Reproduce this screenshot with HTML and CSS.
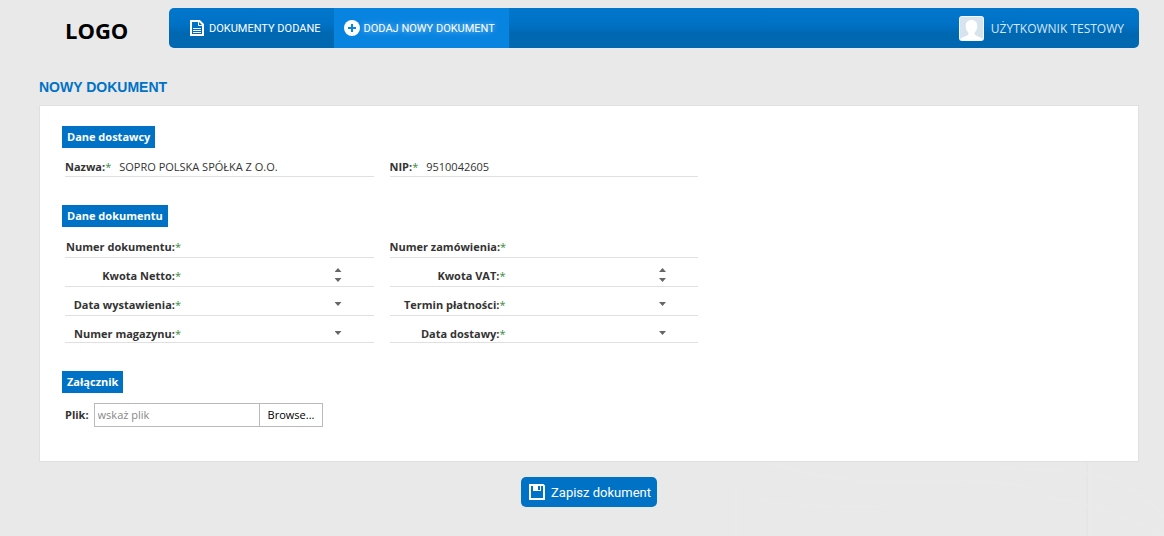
FILE: index.html
```
<!DOCTYPE html>
<html lang="pl">
<head>
<meta charset="utf-8">
<title>Nowy dokument</title>
<meta name="viewport" content="width=device-width, initial-scale=1">
<link rel="stylesheet" href="styles.css">
</head>
<body>
<svg class="backdrop" viewBox="0 0 464 96" aria-hidden="true">
  <path class="streak-dark" d="M387 20V96"/>
  <path class="streak-light" d="M390 20V96M36 50V96M70 24Q140 44 210 42T330 46M60 60Q130 70 190 66M300 28Q370 30 400 36T464 76M345 56Q420 70 464 96"/>
</svg>
<div class="page">
  <header class="header">
    <div class="logo">LOGO</div>
    <nav class="nav">
      <a class="nav-link" href="#">
        <svg width="14" height="16" viewBox="0 0 14 16" aria-hidden="true"><path d="M1 1h8.500l3.500 3.500V15H1z" fill="none" stroke="#fff" stroke-width="2"/><path d="M8.500 1v4.500H13M3 8.500h8M3 10.500h8M3 12.500h8" fill="none" stroke="#fff"/></svg>
        <span>DOKUMENTY DODANE</span>
      </a>
      <a class="nav-link active" href="#" aria-current="page">
        <svg width="16" height="16" viewBox="0 0 16 16" aria-hidden="true"><circle cx="8" cy="8" r="8" fill="#fff"/><path d="M8 4v8M4 8h8" stroke="#0783e0" stroke-width="2"/></svg>
        <span>DODAJ NOWY DOKUMENT</span>
      </a>
      <a class="user" href="#">
        <svg width="25" height="25" viewBox="0 0 25 25" aria-hidden="true"><rect width="25" height="25" rx="3" fill="#f2f7fa"/><rect x="1" y="1" width="23" height="23" rx="2" fill="#d7e4ee"/><path d="M12.500 4c3.700 0 5.800 2.500 5.800 6 0 2.800-1 5-2.600 6.300v2.200c1 1.700 5.800 2 7.800 4.500v1H1.500v-1c2-2.500 6.800-2.800 7.800-4.500v-2.200C7.700 15 6.700 12.800 6.700 10c0-3.500 2.100-6 5.800-6z" fill="#fff"/></svg>
        <span>UŻYTKOWNIK TESTOWY</span>
      </a>
    </nav>
  </header>

  <main>
    <h1 class="title">NOWY DOKUMENT</h1>
    <form>
      <div class="panel">
        <section class="group">
          <h2 class="tag">Dane dostawcy</h2>
          <div class="fields">
            <div class="field compact">
              <label for="nazwa">Nazwa:<span class="req">*</span></label>
              <input id="nazwa" type="text" value="SOPRO POLSKA SPÓŁKA Z O.O.">
            </div>
            <div class="field compact">
              <label for="nip">NIP:<span class="req">*</span></label>
              <input id="nip" type="text" value="9510042605">
            </div>
          </div>
        </section>

        <section class="group">
          <h2 class="tag">Dane dokumentu</h2>
          <div class="fields spaced">
            <div class="field">
              <label for="numer-dok">Numer dokumentu:<span class="req">*</span></label>
              <input id="numer-dok" type="text">
            </div>
            <div class="field">
              <label for="numer-zam">Numer zamówienia:<span class="req">*</span></label>
              <input id="numer-zam" type="text">
            </div>
            <div class="field">
              <label for="netto">Kwota Netto:<span class="req">*</span></label>
              <input id="netto" type="text" inputmode="decimal">
              <div class="spinner">
                <button type="button" class="arrow up" aria-label="Zwiększ kwotę netto"></button>
                <button type="button" class="arrow" aria-label="Zmniejsz kwotę netto"></button>
              </div>
            </div>
            <div class="field">
              <label for="vat">Kwota VAT:<span class="req">*</span></label>
              <input id="vat" type="text" inputmode="decimal">
              <div class="spinner">
                <button type="button" class="arrow up" aria-label="Zwiększ kwotę VAT"></button>
                <button type="button" class="arrow" aria-label="Zmniejsz kwotę VAT"></button>
              </div>
            </div>
            <div class="field">
              <label for="wystawienie">Data wystawienia:<span class="req">*</span></label>
              <input id="wystawienie" type="text">
              <button type="button" class="arrow" aria-label="Wybierz datę wystawienia"></button>
            </div>
            <div class="field">
              <label for="termin">Termin płatności:<span class="req">*</span></label>
              <input id="termin" type="text">
              <button type="button" class="arrow" aria-label="Wybierz termin płatności"></button>
            </div>
            <div class="field last">
              <label for="magazyn">Numer magazynu:<span class="req">*</span></label>
              <div class="select">
                <select id="magazyn"><option></option></select>
                <span class="arrow"></span>
              </div>
            </div>
            <div class="field last">
              <label for="dostawa">Data dostawy:<span class="req">*</span></label>
              <input id="dostawa" type="text">
              <button type="button" class="arrow" aria-label="Wybierz datę dostawy"></button>
            </div>
          </div>
        </section>

        <section class="group">
          <h2 class="tag">Załącznik</h2>
          <div class="file">
            <label for="plik">Plik:</label>
            <div class="file-box">
              <input id="plik" type="text" placeholder="wskaż plik">
              <button type="button">Browse...</button>
            </div>
          </div>
        </section>
      </div>
      <div class="actions">
        <button class="save" type="submit">
          <svg width="16" height="16" viewBox="0 0 16 16" aria-hidden="true"><path d="M1 1h13l1 1V15H1z" fill="none" stroke="#fff" stroke-width="2"/><path d="M4 1h8v6H4z" fill="#fff"/><path d="M9 2h2v4H9z" fill="#0072c6"/></svg>
          <span>Zapisz dokument</span>
        </button>
      </div>
    </form>
  </main>
</div>
</body>
</html>
```
FILE: styles.css
```
* {
  box-sizing: border-box;
}

body {
  margin: 0;
  min-height: 100vh;
  position: relative;
  background: #e9e9e9;
  color: #333;
  font: 11px/16px "Open Sans", "Noto Sans", sans-serif;
}

button,
input,
select {
  margin: 0;
  padding: 0;
  border: 0;
  background: none;
  color: inherit;
  font: inherit;
}

svg {
  display: block;
  flex: none;
}

.backdrop {
  position: absolute;
  right: 0;
  bottom: 0;
  width: 464px;
  height: 96px;
  fill: none;
  stroke-width: 2;
}

.streak-dark {
  stroke: #e6e6e6;
}

.streak-light {
  stroke: #eaeaea;
}

.page {
  position: relative;
  padding: 8px 25px 24px 39px;
}

.header {
  display: flex;
  align-items: stretch;
}

.logo {
  width: 130px;
  padding: 6px 0 0 26px;
  color: #000;
  font-size: 22px;
  font-weight: 700;
  line-height: 32px;
}

.nav {
  flex: 1;
  display: flex;
  height: 40px;
  overflow: hidden;
  border-radius: 5px;
  background: linear-gradient(#0077cc, #0072c6 40%, #0067b1 65%, #0067b1);
}

.nav-link {
  display: flex;
  align-items: center;
  gap: 5px;
  padding: 0 13px 0 21px;
  color: #fff;
  font: 11px/16px Roboto, sans-serif;
  text-decoration: none;
}

.nav-link span,
.user span,
.save span {
  padding-top: 2px;
}

.nav-link.active {
  padding: 0 14px 0 10px;
  gap: 4px;
  background: #0783e0;
  text-shadow: 0 0 6px #9fd4ff;
}

.user {
  display: flex;
  align-items: center;
  gap: 7px;
  margin-left: auto;
  padding-right: 15px;
  color: #d5e8f6;
  font-size: 12px;
  text-decoration: none;
}

.title {
  margin: 0;
  padding: 31px 0 10px;
  color: #0072c6;
  font: 700 14px/16px "Liberation Sans", Arial, sans-serif;
}

.panel {
  padding: 20px 22px 34px;
  border: 1px solid #e0e0e0;
  background: #fff;
}

.group + .group {
  margin-top: 28px;
}

.tag {
  width: fit-content;
  margin: 0;
  padding: 3px 5px;
  background: #0072c6;
  color: #fff;
  font-size: 11px;
  font-weight: 700;
  line-height: 16px;
}

.fields {
  display: grid;
  grid-template-columns: 1fr 1fr;
  column-gap: 16px;
  max-width: 636px;
  padding-left: 3px;
}

.fields.spaced {
  padding-top: 2px;
}

.field {
  display: flex;
  align-items: center;
  height: 29px;
  padding-top: 6px;
  border-bottom: 1px solid #e0e0e0;
}

.field.compact {
  padding-top: 8px;
}

.field.last {
  height: 27px;
  padding-top: 8px;
}

.field label {
  flex: none;
  width: 116px;
  padding-top: 2px;
  text-align: right;
  white-space: nowrap;
  font-weight: 700;
}

.field.compact label {
  width: auto;
  padding-right: 8px;
}

.field input,
.field select {
  flex: 1;
  min-width: 0;
  height: 18px;
}

.select {
  flex: 1;
  display: grid;
  align-items: center;
}

.select > * {
  grid-area: 1 / 1;
}

.select select {
  appearance: none;
}

.select .arrow {
  justify-self: end;
  pointer-events: none;
}

.req {
  color: #3a8a3a;
  font-weight: 400;
}

.arrow {
  width: 7px;
  height: 4px;
  margin-right: 32px;
  background: #666;
  clip-path: polygon(0 0, 100% 0, 50% 100%);
}

.arrow.up {
  clip-path: polygon(50% 0, 100% 100%, 0 100%);
}

.spinner {
  display: flex;
  flex-direction: column;
  gap: 6px;
}

.file {
  display: flex;
  align-items: center;
  gap: 5px;
  padding: 10px 0 0 3px;
}

.file label {
  font-weight: 700;
}

.file-box {
  display: flex;
  height: 24px;
  border: 1px solid #bababa;
}

.file-box input {
  width: 164px;
  padding: 0 3px;
}

.file-box input::placeholder {
  color: #888;
}

.file-box button {
  padding: 0 8px;
  border-left: 1px solid #bababa;
  color: #000;
}

.actions {
  display: flex;
  justify-content: center;
  padding-top: 15px;
}

.save {
  display: flex;
  align-items: center;
  gap: 6px;
  height: 30px;
  padding: 0 6px 0 8px;
  border-radius: 5px;
  background: #0072c6;
  color: #fff;
  font: 13px/16px Roboto, sans-serif;
}
```
